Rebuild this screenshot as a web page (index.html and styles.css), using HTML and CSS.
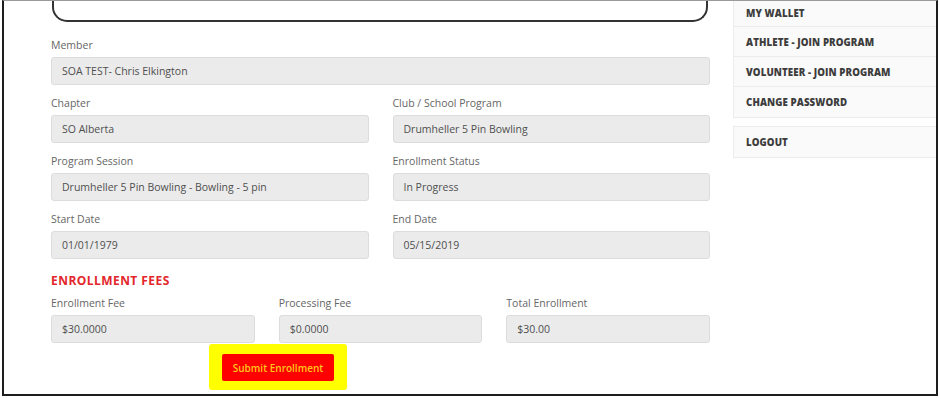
FILE: index.html
```html
<!DOCTYPE html>
<html lang="en">
<head>
<meta charset="utf-8">
<title>Enrollment</title>
<link rel="stylesheet" href="styles.css">
</head>
<body>
<div class="frame">
  <main class="main">
    <div class="topbox"></div>

    <div class="field">
      <label class="label">Member</label>
      <div class="input">SOA TEST- Chris Elkington</div>
    </div>

    <div class="grid2">
      <div class="field">
        <label class="label">Chapter</label>
        <div class="input">SO Alberta</div>
      </div>
      <div class="field">
        <label class="label">Club / School Program</label>
        <div class="input">Drumheller 5 Pin Bowling</div>
      </div>
      <div class="field">
        <label class="label">Program Session</label>
        <div class="input">Drumheller 5 Pin Bowling - Bowling - 5 pin</div>
      </div>
      <div class="field">
        <label class="label">Enrollment Status</label>
        <div class="input">In Progress</div>
      </div>
      <div class="field">
        <label class="label">Start Date</label>
        <div class="input">01/01/1979</div>
      </div>
      <div class="field">
        <label class="label">End Date</label>
        <div class="input">05/15/2019</div>
      </div>
    </div>

    <h3 class="fees-title">ENROLLMENT FEES</h3>

    <div class="grid3">
      <div class="field">
        <label class="label">Enrollment Fee</label>
        <div class="input">$30.0000</div>
      </div>
      <div class="field">
        <label class="label">Processing Fee</label>
        <div class="input">$0.0000</div>
      </div>
      <div class="field">
        <label class="label">Total Enrollment</label>
        <div class="input">$30.00</div>
      </div>
    </div>

    <div class="actions">
      <span class="highlight"><button class="submit" type="button">Submit Enrollment</button></span>
    </div>
  </main>

  <aside class="sidebar">
    <ul class="menu">
      <li class="menu-item first">MY WALLET</li>
      <li class="menu-item">ATHLETE - JOIN PROGRAM</li>
      <li class="menu-item">VOLUNTEER - JOIN PROGRAM</li>
      <li class="menu-item">CHANGE PASSWORD</li>
    </ul>
    <ul class="menu">
      <li class="menu-item">LOGOUT</li>
    </ul>
  </aside>
</div>
</body>
</html>
```

FILE: styles.css
```css
* { box-sizing: border-box; }

html, body {
  margin: 0;
  padding: 0;
  background: #ffffff;
}

body {
  font-family: "Open Sans", "Noto Sans", sans-serif;
  color: #555;
  width: 940px;
  height: 398px;
  overflow: hidden;
}

.frame {
  display: flex;
  margin: 0 2px 2px 2px;
  height: 396px;
  border-top: 1px solid #9a9a9a;
  border-left: 2px solid #1e1e1e;
  border-right: 2px solid #1e1e1e;
  border-bottom: 2px solid #1e1e1e;
  overflow: hidden;
}

.main {
  width: 729px;
  flex: none;
  padding: 0 23px 0 47px;
}

.topbox {
  height: 21px;
  margin: 0 2px 16px 1px;
  border: 2px solid #333;
  border-top: none;
  border-radius: 0 0 15px 15px;
}

.field {
  display: flex;
  flex-direction: column;
  margin-bottom: 11px;
}

.label {
  font-size: 10.5px;
  line-height: 14px;
  color: #666;
  margin-bottom: 5px;
}

.input {
  height: 28px;
  background: #ebebeb;
  border: 1px solid #dcdcdc;
  border-radius: 3px;
  padding: 0 10px;
  font-size: 10.5px;
  line-height: 26px;
  color: #4f4f4f;
  white-space: nowrap;
}

.grid2 {
  display: grid;
  grid-template-columns: 1fr 1fr;
  column-gap: 24px;
}

.grid3 {
  display: grid;
  grid-template-columns: 1fr 1fr 1fr;
  column-gap: 24px;
}

.grid3 .field { margin-bottom: 0; }

.fees-title {
  margin: 3px 0 7px 0;
  font-size: 12px;
  line-height: 16px;
  font-weight: 700;
  color: #e3262b;
  letter-spacing: 0.45px;
}

.actions {
  margin-top: 1px;
  padding-left: 158px;
}

.highlight {
  display: inline-block;
  background: #ffff00;
  padding: 10px 13px 9px 13px;
  border-radius: 3px;
}

.submit {
  display: block;
  width: 112px;
  height: 27px;
  background: #ff0000;
  border: none;
  border-radius: 2px;
  color: #ffc61a;
  font-family: "Open Sans", "Noto Sans", sans-serif;
  font-size: 10px;
  font-weight: 600;
  padding: 0;
}

.sidebar {
  flex: 1;
}

.menu {
  list-style: none;
  margin: 0 0 8px 0;
  padding: 0;
  background: #fafafa;
  border: 1px solid #ececec;
  border-right: none;
}

.menu:first-child {
  border-top: none;
}

.menu-item {
  height: 30px;
  padding-top: 3px;
  line-height: 26px;
  padding-left: 12px;
  border-bottom: 1px solid #ececec;
  font-size: 9.7px;
  font-weight: 800;
  color: #3d3d3d;
  letter-spacing: 0.1px;
}

.menu-item:last-child { border-bottom: none; }

.menu-item.first {
  height: 26px;
  padding-top: 1px;
  line-height: 24px;
}
```
